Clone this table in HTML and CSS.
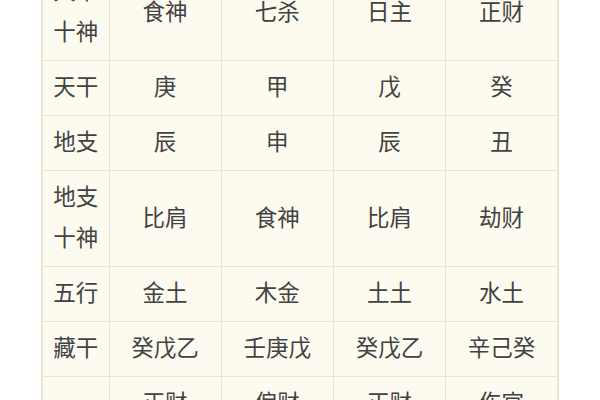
FILE: index.html
```html
<!DOCTYPE html>
<html lang="zh">
<head>
<meta charset="utf-8">
<link rel="stylesheet" href="styles.css">
</head>
<body>
<div class="page">
<table class="chart">
  <colgroup>
    <col class="c-label"><col><col><col><col>
  </colgroup>
  <tbody>
    <tr><th>天干<br>十神</th><td>食神</td><td>七杀</td><td>日主</td><td>正财</td></tr>
    <tr><th>天干</th><td>庚</td><td>甲</td><td>戊</td><td>癸</td></tr>
    <tr><th>地支</th><td>辰</td><td>申</td><td>辰</td><td>丑</td></tr>
    <tr><th>地支<br>十神</th><td>比肩</td><td>食神</td><td>比肩</td><td>劫财</td></tr>
    <tr><th>五行</th><td>金土</td><td>木金</td><td>土土</td><td>水土</td></tr>
    <tr><th>藏干</th><td>癸戊乙</td><td>壬庚戊</td><td>癸戊乙</td><td>辛己癸</td></tr>
    <tr class="top"><th>藏干<br>十神</th><td>正财<br>比肩<br>正官</td><td>偏财<br>食神<br>比肩</td><td>正财<br>比肩<br>正官</td><td>伤官<br>劫财<br>正财</td></tr>
  </tbody>
</table>
</div>
</body>
</html>
```
FILE: styles.css
```css
html, body {
  margin: 0;
  padding: 0;
  background: #ffffff;
}
.page {
  width: 600px;
  height: 400px;
  overflow: hidden;
}
.chart {
  margin: -37px 0 0 41px;
  width: 518px;
  border-collapse: collapse;
  table-layout: fixed;
  background: #fdfbf0;
  border: 2px solid #ebe7d3;
  font-family: "Noto Sans CJK SC", "Noto Sans", sans-serif;
  font-size: 22.5px;
  line-height: 41px;
  color: #424242;
}
.c-label {
  width: 67px;
}
.chart th, .chart td {
  border: 1px solid #e8e4cd;
  padding: 4px 0 9px;
  text-align: center;
  vertical-align: middle;
  font-weight: normal;
}
.chart tr.top td {
  vertical-align: top;
}
```
